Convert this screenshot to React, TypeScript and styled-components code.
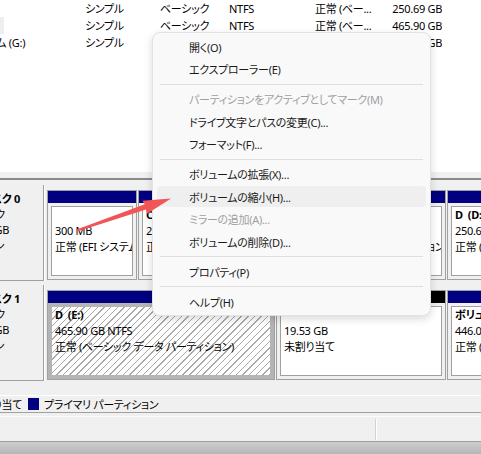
import React from 'react';
import styled, { createGlobalStyle } from 'styled-components';

const GlobalStyle = createGlobalStyle`
  html, body { margin: 0; padding: 0; background: #f0f0f0; }
  #root { width: 481px; height: 454px; }
`;

const FONT = `"Noto Sans", "Noto Sans CJK JP", sans-serif`;

const Screen = styled.div`
  position: relative;
  width: 481px;
  height: 454px;
  overflow: hidden;
  display: flex;
  flex-direction: column;
  background: #f0f0f0;
  font-family: ${FONT};
  font-size: 11px;
  letter-spacing: -0.3px;
  font-feature-settings: "palt";
  color: #000;
`;

/* ---------- volume list ---------- */
const VolumeList = styled.div`
  flex: none;
  height: 172px;
  background: #fff;
  overflow: hidden;
`;

const ListRow = styled.div`
  display: grid;
  grid-template-columns: 127px 75px 69px 86px 70px 57px 120px;
  margin-left: -42px;
  height: 17px;
  line-height: 17px;
  white-space: nowrap;
`;

const Cell = styled.div<{ $right?: boolean }>`
  overflow: hidden;
  text-align: ${(p) => (p.$right ? 'right' : 'left')};
`;

const NameText = styled.span<{ $selected?: boolean }>`
  display: inline-block;
  min-width: 46px;
  background: ${(p) => (p.$selected ? '#eeeeee' : 'transparent')};
`;

const Splitter = styled.div`
  flex: none;
  height: 5.5px;
  border-bottom: 2px solid #8a8a8a;
`;

/* ---------- graphical disk view ---------- */
const DiskArea = styled.div`
  flex: none;
  display: flex;
  flex-direction: column;
  gap: 4px;
  padding: 5.5px 0 14px;
`;

const DiskRow = styled.div`
  display: flex;
  height: 96px;
  gap: 3px;
`;

const DiskLabel = styled.div`
  flex: none;
  width: 44px;
  box-sizing: border-box;
  border-right: 1px solid #a0a0a0;
  border-bottom: 1px solid #a0a0a0;
  box-shadow: 1px 0 0 #fff;
  padding-top: 6px;
  overflow: hidden;
  line-height: 15.5px;
`;

const LabelLine = styled.div<{ $end: number; $bold?: boolean }>`
  display: flex;
  justify-content: flex-end;
  width: ${(p) => p.$end}px;
  white-space: nowrap;
  font-weight: ${(p) => (p.$bold ? 700 : 400)};
`;

const PartitionStrip = styled.div`
  flex: 1;
  display: flex;
  gap: 1px;
  padding-top: 5px;
  overflow: hidden;
`;

const Partition = styled.div<{ $width: number }>`
  flex: none;
  width: ${(p) => p.$width}px;
  box-sizing: border-box;
  height: 90px;
  display: flex;
  flex-direction: column;
  border: 1px solid #a0a0a0;
`;

const PartHeader = styled.div<{ $color: string }>`
  flex: none;
  height: 12px;
  background: ${(p) => p.$color};
`;

const PartBody = styled.div<{ $selected?: boolean }>`
  flex: 1;
  min-height: 0;
  padding: 3px;
  background: ${(p) => (p.$selected ? '#b4b4b4' : '#f0f0f0')};
  display: flex;
`;

const PartContent = styled.div<{ $hatched?: boolean }>`
  flex: 1;
  min-width: 0;
  box-sizing: border-box;
  border: 1px solid ${(p) => (p.$hatched ? '#b4b4b4' : '#a0a0a0')};
  padding: 0 0 0 3px;
  line-height: 16px;
  overflow: hidden;
  white-space: nowrap;
  background: ${(p) =>
    p.$hatched
      ? 'repeating-linear-gradient(135deg, #ffffff 0px, #ffffff 3.7px, #a9a9a9 3.7px, #a9a9a9 4.7px)'
      : '#ffffff'};
`;

const PartLine = styled.div<{ $bold?: boolean }>`
  height: 16px;
  font-weight: ${(p) => (p.$bold ? 700 : 400)};
`;

/* ---------- legend + status bar ---------- */
const Legend = styled.div`
  flex: none;
  height: 16px;
  border-top: 1px solid #fff;
  border-bottom: 1px solid #a0a0a0;
  display: flex;
  align-items: center;
  gap: 6px;
  white-space: nowrap;
`;

const LegendClip = styled.div<{ $end: number }>`
  flex: none;
  width: ${(p) => p.$end}px;
  display: flex;
  justify-content: flex-end;
  align-items: center;
  gap: 5px;
`;

const LegendItem = styled.div`
  display: flex;
  align-items: center;
  gap: 5px;
`;

const Swatch = styled.span<{ $color: string }>`
  flex: none;
  width: 11px;
  height: 12px;
  background: ${(p) => p.$color};
`;

const StatusBar = styled.div`
  flex: none;
  margin-top: 3px;
  height: 24px;
  border-top: 1px solid #fbfbfb;
  border-bottom: 1px solid #a0a0a0;
  display: grid;
  grid-template-columns: 376px 1fr;
`;

const StatusPane = styled.div<{ $divider?: boolean }>`
  margin: 2px 0 1px;
  border-right: ${(p) => (p.$divider ? '1px solid #d2d2d2' : 'none')};
  box-shadow: ${(p) => (p.$divider ? '1px 0 0 #fff' : 'none')};
`;

const Desktop = styled.div`
  flex: 1;
  background: linear-gradient(#cdcdcd, #b6b6b6);
`;

/* ---------- context menu ---------- */
const ContextMenu = styled.div`
  position: absolute;
  left: 152px;
  top: 32px;
  width: 279px;
  box-sizing: border-box;
  padding: 2.5px 0 2px;
  display: flex;
  flex-direction: column;
  background: #f9f9f9;
  border: 1px solid #e2e2e2;
  border-radius: 8px;
  box-shadow: 0 3px 9px rgba(0, 0, 0, 0.15);
  color: #1a1a1a;
`;

const MenuItem = styled.div<{ $disabled?: boolean; $active?: boolean }>`
  height: 21px;
  margin: 0.75px 4px;
  padding-left: 32px;
  border-radius: 4px;
  display: flex;
  align-items: center;
  white-space: nowrap;
  color: ${(p) => (p.$disabled ? '#a0a0a0' : '#1a1a1a')};
  background: ${(p) => (p.$active ? '#efefef' : 'transparent')};
`;

const MenuSeparator = styled.div`
  height: 1px;
  margin: 3.25px 7px;
  background: #dedede;
`;

const Overlay = styled.svg`
  position: absolute;
  left: 0;
  top: 0;
  pointer-events: none;
`;

/* ---------- data ---------- */
const volumes = [
  { name: 'D (D:)', cap: '250.69 GB' },
  { name: 'D (E:)', cap: '465.90 GB', selected: true },
  { name: 'ボリューム (G:)', cap: '446.03 GB' },
];

type Part = {
  width: number;
  color: string;
  lines: [string, string, string];
  selected?: boolean;
};

const disks: { label: [string, string, string, string]; ends: number[]; parts: Part[] }[] = [
  {
    label: ['ディスク 0', 'ベーシック', '476.92 GB', 'オンライン'],
    ends: [20, 5, 9, 4],
    parts: [
      { width: 90, color: '#000080', lines: ['', '300 MB', '正常 (EFI システム パーティション)'] },
      { width: 184, color: '#000080', lines: ['C (C:)', '225.00 GB NTFS', '正常 (ブート, ページ ファイル, クラッシュ ダンプ)'] },
      { width: 123, color: '#000080', lines: ['', '990 MB', '正常 (回復パーティション)'] },
      { width: 120, color: '#000080', lines: ['D\u00a0\u00a0(D:)', '250.69 GB NTFS', '正常 (ベーシック データ パーティション)'] },
    ],
  },
  {
    label: ['ディスク 1', 'ベーシック', '931.51 GB', 'オンライン'],
    ends: [20, 5, 9, 4],
    parts: [
      { width: 228, color: '#000080', lines: ['D\u00a0\u00a0(E:)', '465.90 GB NTFS', '正常 (ベーシック データ パーティション)'], selected: true },
      { width: 170, color: '#000000', lines: ['', '19.53 GB', '未割り当て'] },
      { width: 120, color: '#000080', lines: ['ボリューム (G:)', '446.03 GB NTFS', '正常 (ベーシック データ パーティション)'] },
    ],
  },
];

type MenuEntry = { label: string; disabled?: boolean; active?: boolean } | 'sep';

const menu: MenuEntry[] = [
  { label: '開く(O)' },
  { label: 'エクスプローラー(E)' },
  'sep',
  { label: 'パーティションをアクティブとしてマーク(M)', disabled: true },
  { label: 'ドライブ文字とパスの変更(C)...' },
  { label: 'フォーマット(F)...' },
  'sep',
  { label: 'ボリュームの拡張(X)...' },
  { label: 'ボリュームの縮小(H)...', active: true },
  { label: 'ミラーの追加(A)...', disabled: true },
  { label: 'ボリュームの削除(D)...' },
  'sep',
  { label: 'プロパティ(P)' },
  'sep',
  { label: 'ヘルプ(H)' },
];

export default function App() {
  return (
    <>
      <GlobalStyle />
      <Screen>
        <VolumeList>
          {volumes.map((v) => (
            <ListRow key={v.name}>
              <Cell>
                <NameText $selected={v.selected}>{v.name}</NameText>
              </Cell>
              <Cell>シンプル</Cell>
              <Cell>ベーシック</Cell>
              <Cell>NTFS</Cell>
              <Cell>正常 (ベー...</Cell>
              <Cell $right>{v.cap}</Cell>
              <Cell />
            </ListRow>
          ))}
        </VolumeList>
        <Splitter />

        <DiskArea>
          {disks.map((d, i) => (
            <DiskRow key={i}>
              <DiskLabel>
                {d.label.map((t, j) => (
                  <LabelLine key={j} $end={d.ends[j]} $bold={j === 0}>
                    {t}
                  </LabelLine>
                ))}
              </DiskLabel>
              <PartitionStrip>
                {d.parts.map((p, k) => (
                  <Partition key={k} $width={p.width}>
                    <PartHeader $color={p.color} />
                    <PartBody $selected={p.selected}>
                      <PartContent $hatched={p.selected}>
                        <PartLine $bold>{p.lines[0]}</PartLine>
                        <PartLine>{p.lines[1]}</PartLine>
                        <PartLine>{p.lines[2]}</PartLine>
                      </PartContent>
                    </PartBody>
                  </Partition>
                ))}
              </PartitionStrip>
            </DiskRow>
          ))}
        </DiskArea>

        <Legend>
          <LegendClip $end={22}>
            <Swatch $color="#000000" />
            <span>未割り当て</span>
          </LegendClip>
          <LegendItem>
            <Swatch $color="#000080" />
            <span>プライマリ パーティション</span>
          </LegendItem>
        </Legend>

        <StatusBar>
          <StatusPane $divider />
          <StatusPane />
        </StatusBar>
        <Desktop />

        <ContextMenu>
          {menu.map((m, i) =>
            m === 'sep' ? (
              <MenuSeparator key={i} />
            ) : (
              <MenuItem key={i} $disabled={m.disabled} $active={m.active}>
                {m.label}
              </MenuItem>
            )
          )}
        </ContextMenu>

        <Overlay width="481" height="454" viewBox="0 0 481 454">
          <polygon
            points="76.6,229.4 144.8,204.2 142.3,200.8 171,198.5 146.7,214.0 146.0,209.6 77.4,231.6"
            fill="#f25555"
          />
        </Overlay>
      </Screen>
    </>
  );
}
